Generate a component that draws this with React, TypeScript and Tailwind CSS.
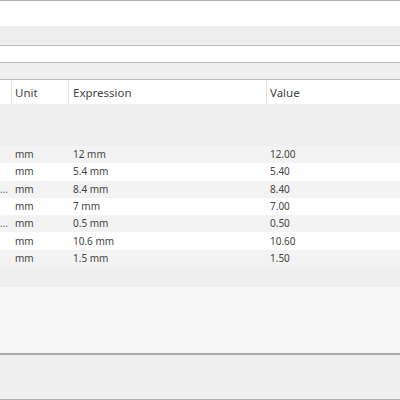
import React from 'react';

type Row = { name: string; unit: string; expr: string; value: string };

const rows: Row[] = [
    { name: '', unit: 'mm', expr: '12 mm', value: '12.00' },
    { name: '', unit: 'mm', expr: '5.4 mm', value: '5.40' },
    { name: '...', unit: 'mm', expr: '8.4 mm', value: '8.40' },
    { name: '', unit: 'mm', expr: '7 mm', value: '7.00' },
    { name: 'o...', unit: 'mm', expr: '0.5 mm', value: '0.50' },
    { name: '', unit: 'mm', expr: '10.6 mm', value: '10.60' },
    { name: '', unit: 'mm', expr: '1.5 mm', value: '1.50' },
];

const App: React.FC = () => {
    return (
        <div className="w-[400px] h-[400px] overflow-hidden flex flex-col bg-white text-[#444]" style={{ fontFamily: '"Noto Sans", "Open Sans", sans-serif' }}>
            {/* top strip */}
            <div className="h-[26px] shrink-0 border-t border-[#b4b4b4] bg-white" />
            <div className="h-[20px] shrink-0 bg-[#eeeeee] border-b border-[#bdbdbd]" />
            <div className="h-[17px] shrink-0 bg-white border-b border-[#bdbdbd]" />
            <div className="h-[17px] shrink-0 bg-[#efefef] border-b border-[#bdbdbd]" />

            {/* header */}
            <div className="h-[24px] shrink-0 flex items-center bg-white text-[11.5px]">
                <div className="w-[12px] h-full border-r border-[#e4e4e4]" />
                <div className="w-[57px] h-full flex items-center pl-[3px] pt-[1px] border-r border-[#e4e4e4]">Unit</div>
                <div className="w-[198px] h-full flex items-center pl-[4px] pt-[1px] border-r border-[#e4e4e4]">Expression</div>
                <div className="flex-1 h-full flex items-center pl-[3px] pt-[1px]">Value</div>
            </div>

            <div className="h-[42px] shrink-0 bg-[#efefef]" />

            {/* parameter rows */}
            <div className="h-[121px] shrink-0 flex flex-col text-[10px]">
                {rows.map((r, i) => (
                    <div key={i} className={`flex-1 flex items-center ${i % 2 === 0 ? 'bg-[#f3f3f3]' : 'bg-white'}`}>
                        <div className="w-[12px] pr-[4px] whitespace-nowrap flex justify-end text-[#666]">{r.name}</div>
                        <div className="w-[57px] pl-[3px]">{r.unit}</div>
                        <div className="w-[198px] pl-[4px]">{r.expr}</div>
                        <div className="flex-1 pl-[3px]">{r.value}</div>
                    </div>
                ))}
            </div>

            <div className="h-[20px] shrink-0 bg-[#efefef]" />
            <div className="h-[68px] shrink-0 bg-[#f6f6f6] border-b-2 border-[#ababab]" />
            <div className="flex-1 bg-[#efefef] border-b border-[#b0b0b0]" />
        </div>
    );
};

export default App;
